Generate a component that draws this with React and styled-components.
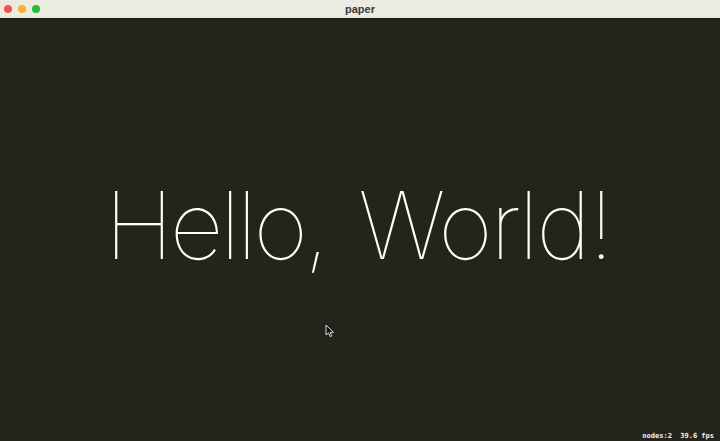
import React from "react";
import styled, { createGlobalStyle } from "styled-components";

const Global = createGlobalStyle`
  html, body { margin: 0; padding: 0; background: #25241c; }
  body { width: 720px; height: 441px; overflow: hidden; }
  #root { width: 720px; height: 441px; }
`;

const Window = styled.div`
  position: relative;
  width: 720px;
  height: 441px;
  display: flex;
  flex-direction: column;
  background: #25241c;
  overflow: hidden;
`;

const TitleBar = styled.div`
  height: 18px;
  flex: 0 0 18px;
  border-bottom: 1px solid #1a1a14;
  background: #ecebe2;
  display: flex;
  align-items: center;
  position: relative;
  padding-left: 4px;
  gap: 6px;
`;

const Light = styled.span`
  width: 8px;
  height: 8px;
  border-radius: 50%;
  background: ${(p) => p.$color};
`;

const Title = styled.div`
  position: absolute;
  left: 0;
  right: 0;
  top: 0;
  height: 18px;
  line-height: 18px;
  text-align: center;
  font-family: "Liberation Sans", Arial, sans-serif;
  font-weight: 700;
  font-size: 11px;
  color: #3a3a3a;
  pointer-events: none;
`;

const Canvas = styled.div`
  flex: 1;
  position: relative;
  display: flex;
  align-items: center;
  justify-content: center;
`;

const Hello = styled.div`
  font-family: "Inter", "Roboto", sans-serif;
  font-weight: 100;
  font-size: 94px;
  color: #fffff2;
  white-space: nowrap;
  margin-left: -4px;
  margin-top: -11px;
  letter-spacing: -2.8px;
`;

const Word = styled.span`
  letter-spacing: ${(p) => p.$ls};
`;

const Stats = styled.div`
  position: absolute;
  right: 6px;
  bottom: 1px;
  font-family: "DejaVu Sans Mono", monospace;
  font-weight: 700;
  font-size: 7px;
  color: #f4f4f4;
  white-space: pre;
`;

const Cursor = styled.svg`
  position: absolute;
  left: 325px;
  top: 305px;
`;

export default function App() {
  return (
    <>
      <Global />
      <Window>
        <TitleBar>
          <Light $color="#f2544c" />
          <Light $color="#f6b12a" />
          <Light $color="#28b83a" />
          <Title>paper</Title>
        </TitleBar>
        <Canvas>
          <Hello>
            <Word $ls="-3.6px">Hello</Word>
            <Word $ls="1px">, </Word>
            <Word $ls="-2.4px">World!</Word>
          </Hello>
          <Cursor width="10" height="14" viewBox="0 0 10 14">
            <path d="M1 1 L1 11 L3.5 8.8 L5.2 12.6 L6.8 11.9 L5.2 8.3 L8.5 8.3 Z" fill="#111" stroke="#ddd" strokeWidth="1" />
          </Cursor>
          <Stats>nodes:2  39.6 fps</Stats>
        </Canvas>
      </Window>
    </>
  );
}
